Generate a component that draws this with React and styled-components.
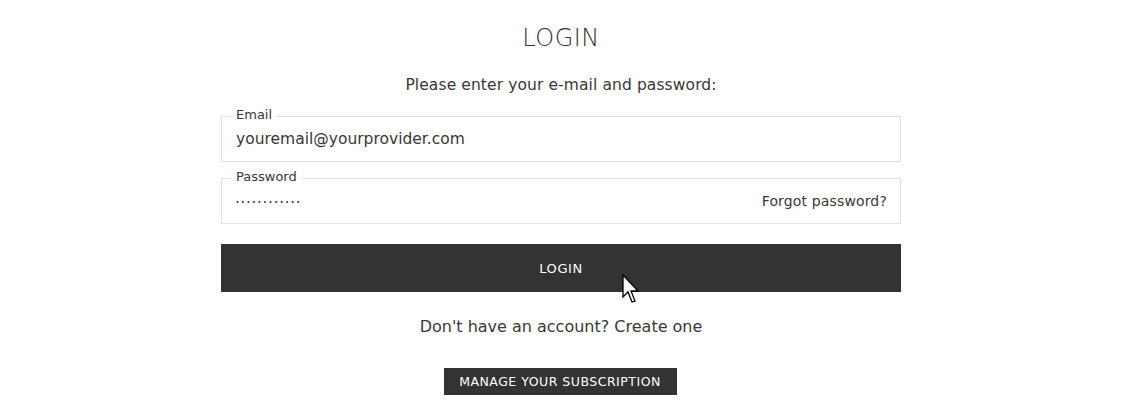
import React from "react";
import styled, { createGlobalStyle } from "styled-components";

const Global = createGlobalStyle`
  html, body { margin: 0; padding: 0; background: #fff; }
  body { font-family: "DejaVu Sans", "Liberation Sans", sans-serif; color: #333; }
  * { box-sizing: border-box; }
`;

const Page = styled.div`
  width: 1122px;
  display: flex;
  justify-content: center;
`;

const Panel = styled.div`
  width: 680px;
  display: flex;
  flex-direction: column;
  align-items: stretch;
  padding-top: 24px;
`;

const Title = styled.h1`
  margin: 0;
  text-align: center;
  font-size: 24px;
  font-weight: 300;
  letter-spacing: 0.5px;
  line-height: 28px;
  color: #333;
`;

const Intro = styled.p`
  margin: 24px 0 0;
  text-align: center;
  font-size: 15.5px;
  letter-spacing: 0.1px;
  line-height: 18px;
  color: #383838;
`;

const Field = styled.div`
  position: relative;
  margin-top: ${(p) => p.$top}px;
  height: 46px;
  padding: 0 13px 0 14px;
  border: 1px solid #e1e1e1;
  display: flex;
  align-items: center;
  justify-content: space-between;
`;

const Legend = styled.span`
  position: absolute;
  left: 9px;
  top: -9px;
  padding: 0 5px;
  background: #fff;
  font-size: 13px;
  line-height: 14px;
  color: #383838;
`;

const Value = styled.span`
  font-size: 15.5px;
  color: #383838;
`;

const Dots = styled.span`
  font-size: 15px;
  letter-spacing: 0.75px;
  color: #383838;
  margin-left: -1px;
  padding-top: 3px;
`;

const Link = styled.a`
  font-size: 14px;
  letter-spacing: 0.15px;
  color: #383838;
  text-decoration: none;
`;

const ButtonWrap = styled.div`
  position: relative;
  margin-top: 20px;
`;

const LoginButton = styled.button`
  display: block;
  width: 100%;
  height: 48px;
  border: none;
  background: #333;
  color: #fff;
  font-family: inherit;
  font-size: 13px;
  letter-spacing: 0.6px;
`;

const Cursor = styled.svg`
  position: absolute;
  left: 401px;
  top: 30px;
`;

const Signup = styled.p`
  margin: 26px 0 0;
  text-align: center;
  font-size: 16px;
  line-height: 18px;
  color: #383838;
`;

const Footer = styled.div`
  display: flex;
  justify-content: center;
  margin-top: 32px;
`;

const SmallButton = styled.button`
  height: 27px;
  width: 233px;
  margin-left: -2px;
  border: none;
  background: #333;
  color: #fff;
  font-family: inherit;
  font-size: 12.5px;
  letter-spacing: 0.5px;
  white-space: nowrap;
  padding: 0;
`;

export default function App() {
  return (
    <>
      <Global />
      <Page>
        <Panel>
          <Title>LOGIN</Title>
          <Intro>Please enter your e-mail and password:</Intro>
          <Field $top={22}>
            <Legend>Email</Legend>
            <Value>youremail@yourprovider.com</Value>
          </Field>
          <Field $top={16}>
            <Legend>Password</Legend>
            <Dots>············</Dots>
            <Link href="#">Forgot password?</Link>
          </Field>
          <ButtonWrap>
            <LoginButton>LOGIN</LoginButton>
            <Cursor width="20" height="30" viewBox="0 0 20 30">
              <path d="M1 1 L1 23 L6 18 L10 28 L13 27 L9 17 L16 17 Z" fill="#fff" stroke="#000" strokeWidth="1.3" strokeLinejoin="miter" />
            </Cursor>
          </ButtonWrap>
          <Signup>Don't have an account? Create one</Signup>
          <Footer>
            <SmallButton>MANAGE YOUR SUBSCRIPTION</SmallButton>
          </Footer>
        </Panel>
      </Page>
    </>
  );
}
